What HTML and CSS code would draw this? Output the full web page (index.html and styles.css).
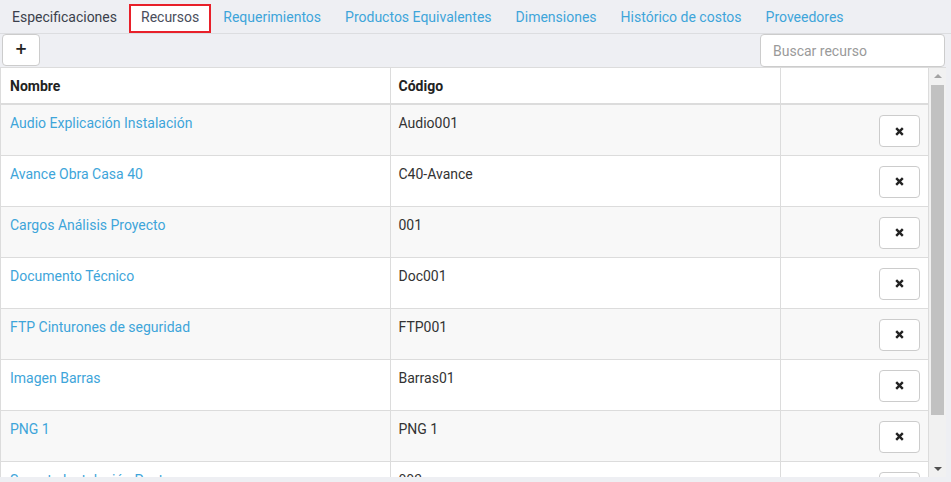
FILE: index.html
```html
<!DOCTYPE html>
<html lang="es">
<head>
<meta charset="utf-8">
<title>Recursos</title>
<link rel="stylesheet" href="styles.css">
</head>
<body>
<div class="page">
  <nav class="tabs">
    <a class="tab tab-plain">Especificaciones</a>
    <a class="tab tab-active">Recursos</a>
    <a class="tab">Requerimientos</a>
    <a class="tab">Productos Equivalentes</a>
    <a class="tab">Dimensiones</a>
    <a class="tab">Histórico de costos</a>
    <a class="tab">Proveedores</a>
  </nav>
  <div class="toolbar">
    <button class="btn-add" type="button">+</button>
    <input class="search" type="text" placeholder="Buscar recurso">
  </div>
  <div class="grid-wrap">
    <div class="grid-scroll">
      <table class="grid">
        <colgroup><col class="c1"><col class="c2"><col class="c3"></colgroup>
        <thead>
          <tr><th>Nombre</th><th>Código</th><th></th></tr>
        </thead>
        <tbody>
          <tr><td><a>Audio Explicación Instalación</a></td><td>Audio001</td><td class="act"><button class="btn-del" type="button"><svg width="9" height="9" viewBox="0 0 9 9"><path d="M1.2 1.2L7.8 7.8M7.8 1.2L1.2 7.8" stroke="#222" stroke-width="2.4"/></svg></button></td></tr>
          <tr><td><a>Avance Obra Casa 40</a></td><td>C40-Avance</td><td class="act"><button class="btn-del" type="button"><svg width="9" height="9" viewBox="0 0 9 9"><path d="M1.2 1.2L7.8 7.8M7.8 1.2L1.2 7.8" stroke="#222" stroke-width="2.4"/></svg></button></td></tr>
          <tr><td><a>Cargos Análisis Proyecto</a></td><td>001</td><td class="act"><button class="btn-del" type="button"><svg width="9" height="9" viewBox="0 0 9 9"><path d="M1.2 1.2L7.8 7.8M7.8 1.2L1.2 7.8" stroke="#222" stroke-width="2.4"/></svg></button></td></tr>
          <tr><td><a>Documento Técnico</a></td><td>Doc001</td><td class="act"><button class="btn-del" type="button"><svg width="9" height="9" viewBox="0 0 9 9"><path d="M1.2 1.2L7.8 7.8M7.8 1.2L1.2 7.8" stroke="#222" stroke-width="2.4"/></svg></button></td></tr>
          <tr><td><a>FTP Cinturones de seguridad</a></td><td>FTP001</td><td class="act"><button class="btn-del" type="button"><svg width="9" height="9" viewBox="0 0 9 9"><path d="M1.2 1.2L7.8 7.8M7.8 1.2L1.2 7.8" stroke="#222" stroke-width="2.4"/></svg></button></td></tr>
          <tr><td><a>Imagen Barras</a></td><td>Barras01</td><td class="act"><button class="btn-del" type="button"><svg width="9" height="9" viewBox="0 0 9 9"><path d="M1.2 1.2L7.8 7.8M7.8 1.2L1.2 7.8" stroke="#222" stroke-width="2.4"/></svg></button></td></tr>
          <tr><td><a>PNG 1</a></td><td>PNG 1</td><td class="act"><button class="btn-del" type="button"><svg width="9" height="9" viewBox="0 0 9 9"><path d="M1.2 1.2L7.8 7.8M7.8 1.2L1.2 7.8" stroke="#222" stroke-width="2.4"/></svg></button></td></tr>
          <tr><td><a>Soporte Instalación Poste</a></td><td>003</td><td class="act"><button class="btn-del" type="button"><svg width="9" height="9" viewBox="0 0 9 9"><path d="M1.2 1.2L7.8 7.8M7.8 1.2L1.2 7.8" stroke="#222" stroke-width="2.4"/></svg></button></td></tr>
        </tbody>
      </table>
    </div>
    <div class="vscroll">
      <span class="arrow arrow-up"></span>
      <div class="track"><div class="thumb"></div></div>
      <span class="arrow arrow-down"></span>
    </div>
  </div>
</div>
</body>
</html>
```

FILE: styles.css
```css
* { box-sizing: border-box; }
html, body {
  margin: 0;
  padding: 0;
  background: #eeeff3;
  font-family: Roboto, "Liberation Sans", Arial, sans-serif;
  font-size: 14px;
  color: #333;
}
.page {
  width: 951px;
  height: 482px;
  overflow: hidden;
}
.tabs {
  display: flex;
  align-items: flex-end;
  height: 34px;
  border-bottom: 1px solid #dcdde0;
  padding-top: 3px;
}
.tab {
  display: block;
  height: 30px;
  line-height: 26px;
  padding: 0 12px;
  color: #3ea5da;
  font-size: 14px;
  white-space: nowrap;
  margin-bottom: -1px;
}
.tab-plain { color: #3b3f4c; }
.tab-active {
  background: #fff;
  color: #4a4e5c;
  border: 2px solid #e8202a;
  height: 29px;
  line-height: 23px;
  padding: 0 10px;
  margin-bottom: 0;
  margin-top: 1px;
}
.toolbar {
  display: flex;
  justify-content: space-between;
  align-items: flex-start;
  height: 33px;
  padding: 0 6px 0 2px;
}
.btn-add {
  width: 38px;
  height: 32px;
  background: #fff;
  border: 1px solid #ccc;
  border-radius: 4px;
  font-family: "DejaVu Sans", sans-serif;
  font-weight: bold;
  font-size: 15px;
  line-height: 1;
  color: #222;
  padding: 0 0 1px 0;
}
.search {
  width: 185px;
  height: 33px;
  border: 1px solid #ccc;
  border-radius: 4px;
  background: #fff;
  padding: 0 12px;
  font-family: Roboto, "Liberation Sans", Arial, sans-serif;
  font-size: 14px;
  color: #555;
  outline: none;
}
.search::placeholder { color: #9a9a9a; }
.grid-wrap {
  display: flex;
  height: 410px;
  width: 946px;
  background: #fff;
  border-top: 1px solid #dcdcdc;
}
.grid-scroll {
  width: 929px;
  height: 409px;
  overflow: hidden;
  border-left: 1px solid #dcdcdc;
  border-right: 1px solid #dcdcdc;
}
.grid {
  width: 927px;
  border-collapse: collapse;
  table-layout: fixed;
}
.c1 { width: 389px; }
.c2 { width: 390px; }
.c3 { width: 148px; }
.grid th {
  height: 36px;
  text-align: left;
  font-weight: bold;
  color: #222;
  padding: 0 8px;
  border-bottom: 2px solid #dcdcdc;
  border-left: 1px solid #dcdcdc;
  background: #fff;
}
.grid td {
  height: 51px;
  padding: 8px 8px 0 8px;
  line-height: 20px;
  vertical-align: top;
  border-bottom: 1px solid #dcdcdc;
  border-left: 1px solid #dcdcdc;
  color: #333;
}
.grid th:first-child, .grid td:first-child {
  border-left: none;
  padding-left: 9px;
}
.grid tbody tr:nth-child(odd) td { background: #f8f8f8; }
.grid tbody tr:nth-child(even) td { background: #fff; }
.grid td a { color: #3ea5da; }
.grid td.act {
  text-align: right;
  vertical-align: top;
  padding: 10px 8px 0 0;
}
.btn-del {
  width: 41px;
  height: 32px;
  background: #fff;
  border: 1px solid #ccc;
  border-radius: 4px;
  display: inline-flex;
  align-items: center;
  justify-content: center;
  padding: 0;
}
.vscroll {
  width: 17px;
  height: 409px;
  background: #f1f1f1;
  display: flex;
  flex-direction: column;
  align-items: center;
}
.arrow {
  width: 0;
  height: 0;
  border-left: 4px solid transparent;
  border-right: 4px solid transparent;
  flex: none;
}
.arrow-up {
  border-bottom: 4px solid #a3a3a3;
  margin: 6px 0 7px;
}
.arrow-down {
  border-top: 4px solid #505050;
  margin: 7px 0 6px;
}
.track {
  flex: 1;
  width: 100%;
  display: flex;
  justify-content: center;
}
.thumb {
  width: 13px;
  height: 330px;
  background: #c1c1c1;
}
```
